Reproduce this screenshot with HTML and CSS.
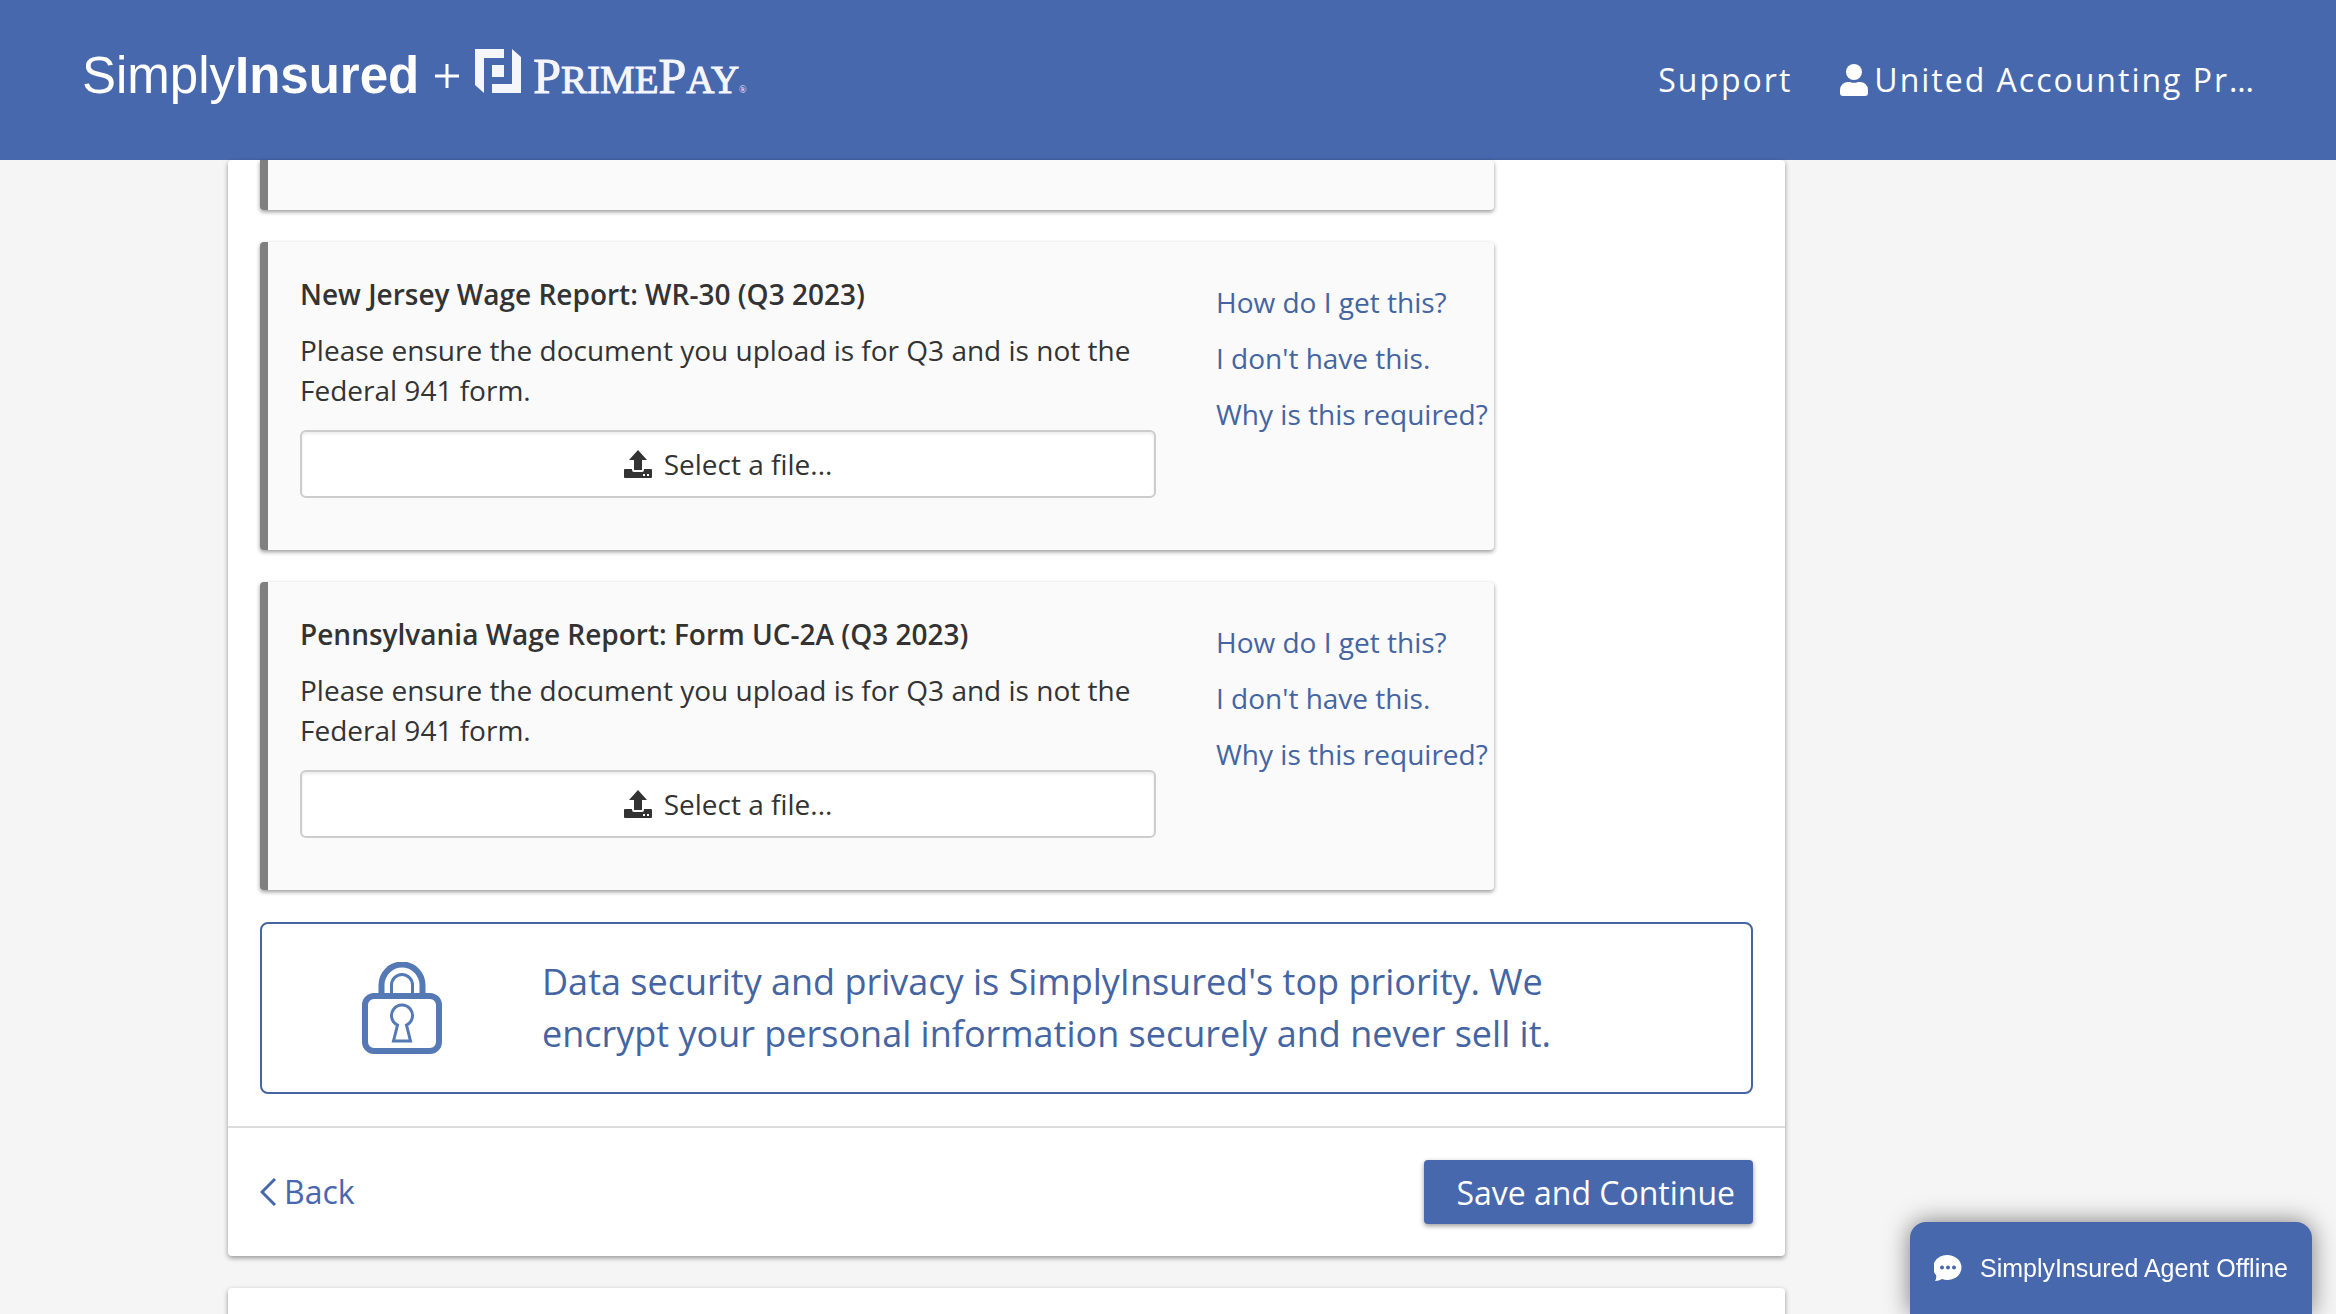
FILE: index.html
```html
<!DOCTYPE html>
<html lang="en">
<head>
    <meta charset="UTF-8">
    <meta name="viewport" content="width=device-width, initial-scale=1.0">
    <title>SimplyInsured - Documents</title>
    <link rel="stylesheet" href="styles.css">
</head>
<body>
    <header class="header">
        <a class="brand" href="#">
            <span class="brand-name">Simply<b>Insured</b></span>
            <svg class="brand-plus" viewBox="0 0 24 24"><path d="M12 0v24M0 12h24" stroke="#fff" stroke-width="3"/></svg>
            <svg class="brand-mark" viewBox="0 0 46 44" fill="#f5f6fb">
                <path d="M0 0H29V9H9V44L0 36Z"/>
                <path d="M37 0L46 8V44H17V35H37Z"/>
                <path d="M17 16H29V28H17Z"/>
            </svg>
            <span class="partner">P<small>RIME</small>P<small>AY</small><sub>®</sub></span>
        </a>
        <nav class="nav">
            <a href="#">Support</a>
            <a class="account" href="#">
                <svg class="user-icon" viewBox="0 0 28 32" fill="#fff"><circle cx="14" cy="8" r="8"/><path d="M8 18h2a10 10 0 0 0 8 0h2a8 8 0 0 1 8 8v3a3 3 0 0 1-3 3H3a3 3 0 0 1-3-3v-3a8 8 0 0 1 8-8z"/></svg>
                <span>United Accounting Pr…</span>
            </a>
        </nav>
    </header>

    <main class="main">
        <section class="card">
            <div class="card-body">
                <div class="document document-previous"></div>

                <div class="document">
                    <div class="document-form">
                        <h2>New Jersey Wage Report: WR-30 (Q3 2023)</h2>
                        <p>Please ensure the document you upload is for Q3 and is not the Federal 941 form.</p>
                        <button class="upload" type="button">
                            <svg class="upload-icon" viewBox="0 0 28 28" fill="#333"><path d="M14 0L23 10H18V20H10V10H5Z"/><path fill-rule="evenodd" d="M1 19H8V20Q8 22 10 22H18Q20 22 20 20V19H27Q28 19 28 20V27Q28 28 27 28H1Q0 28 0 27V20Q0 19 1 19ZM19 24V26H21V24ZM23 24V26H25V24Z"/></svg>
                            Select a file...
                        </button>
                    </div>
                    <div class="document-links">
                        <a href="#">How do I get this?</a>
                        <a href="#">I don't have this.</a>
                        <a href="#">Why is this required?</a>
                    </div>
                </div>

                <div class="document">
                    <div class="document-form">
                        <h2>Pennsylvania Wage Report: Form UC-2A (Q3 2023)</h2>
                        <p>Please ensure the document you upload is for Q3 and is not the Federal 941 form.</p>
                        <button class="upload" type="button">
                            <svg class="upload-icon" viewBox="0 0 28 28" fill="#333"><path d="M14 0L23 10H18V20H10V10H5Z"/><path fill-rule="evenodd" d="M1 19H8V20Q8 22 10 22H18Q20 22 20 20V19H27Q28 19 28 20V27Q28 28 27 28H1Q0 28 0 27V20Q0 19 1 19ZM19 24V26H21V24ZM23 24V26H25V24Z"/></svg>
                            Select a file...
                        </button>
                    </div>
                    <div class="document-links">
                        <a href="#">How do I get this?</a>
                        <a href="#">I don't have this.</a>
                        <a href="#">Why is this required?</a>
                    </div>
                </div>

                <div class="security">
                    <div class="security-icon">
                        <svg class="lock" viewBox="0 0 80 92" fill="none" stroke="#5579b5">
                            <path d="M19.500 33V23A20.500 20.500 0 0 1 60.500 23V33" stroke-width="6"/>
                            <path d="M29.500 33V23A10.500 10.500 0 0 1 50.500 23V33" stroke-width="3"/>
                            <rect x="3" y="34" width="74" height="55" rx="9" stroke-width="6"/>
                            <path d="M35.500 63A10.500 10.500 0 1 1 44.500 63L48.500 79H31.500Z" stroke-width="3"/>
                        </svg>
                    </div>
                    <p>Data security and privacy is SimplyInsured's top priority. We encrypt your personal information securely and never sell it.</p>
                </div>
            </div>

            <div class="card-footer">
                <a class="back" href="#">
                    <svg class="back-icon" viewBox="0 0 16 28"><path d="M15 1L2 14L15 27" fill="none" stroke="#4868ae" stroke-width="3"/></svg>
                    Back
                </a>
                <button class="save" type="submit">Save and Continue</button>
            </div>
        </section>

        <section class="card card-next"></section>
    </main>

    <button class="chat" type="button">
        <svg class="chat-icon" viewBox="0 0 28 28"><path d="M14 1A14 12.500 0 1 1 8 25Q5 27 1 27Q3 24 2 21A14 12.500 0 0 1 14 1Z" fill="#fff"/><g fill="#4868ae"><circle cx="8" cy="13.500" r="2"/><circle cx="14" cy="13.500" r="2"/><circle cx="20" cy="13.500" r="2"/></g></svg>
        SimplyInsured Agent Offline
    </button>
</body>
</html>
```
FILE: styles.css
```css
* {
    box-sizing: border-box;
}
body {
    margin: 0;
    background: #f5f5f5;
    color: #333;
    font-family: "Open Sans", sans-serif;
    font-size: 28px;
    line-height: 40px;
    height: 100vh;
    overflow: hidden;
}
a {
    color: #4464a2;
    text-decoration: none;
}
button {
    font-family: inherit;
    cursor: pointer;
}
.header {
    display: flex;
    justify-content: space-between;
    height: 160px;
    padding: 0 80px 0 82px;
    background: #4868ae;
}
.brand {
    display: flex;
    align-items: baseline;
    align-self: flex-start;
    padding-top: 46px;
    color: #fff;
    line-height: 60px;
}
.brand-name {
    font-family: "Liberation Sans", sans-serif;
    font-size: 51px;
}
.brand-plus {
    align-self: center;
    width: 24px;
    height: 24px;
    margin: 0 16px;
}
.brand-mark {
    width: 46px;
    height: 44px;
    margin-right: 12px;
}
.partner {
    font-family: "Liberation Serif", serif;
    font-size: 50px;
    color: #f5f6fb;
    -webkit-text-stroke: 1px #f5f6fb;
}
.partner small {
    font-size: 39px;
    line-height: 1;
}
.partner sub {
    font-size: 10px;
    line-height: 1;
    vertical-align: baseline;
    -webkit-text-stroke: 0;
}
.nav {
    display: flex;
    align-items: center;
    gap: 48px;
    font-size: 32px;
    letter-spacing: 2px;
}
.nav a {
    color: #fff;
}
.account {
    display: flex;
    align-items: center;
    gap: 6px;
}
.user-icon {
    width: 28px;
    height: 32px;
}
.main {
    width: 1557px;
    max-width: 100%;
    margin-left: 228px;
}
.card {
    margin-bottom: 32px;
    background: #fff;
    border-radius: 4px;
    box-shadow: 0 2px 5px rgba(0, 0, 0, 0.4);
}
.card-next {
    height: 200px;
}
.card-body {
    padding: 0 32px 32px;
}
.document {
    display: flex;
    justify-content: space-between;
    width: 1234px;
    max-width: 100%;
    min-height: 308px;
    margin-bottom: 32px;
    padding: 32px 0 52px 32px;
    background: #fafafa;
    border-left: 8px solid #808080;
    border-radius: 4px;
    box-shadow: 0 2px 4px rgba(0, 0, 0, 0.4);
}
.document-previous {
    min-height: 50px;
    padding: 0;
    border-top-left-radius: 0;
}
.document-form {
    width: 856px;
}
.document h2 {
    margin: 0 0 16px;
    font-size: 28px;
    font-weight: 600;
}
.document p {
    margin: 0 0 20px;
}
.upload {
    display: flex;
    justify-content: center;
    align-items: center;
    gap: 12px;
    width: 100%;
    height: 68px;
    background: #fff;
    border: 2px solid #ccc;
    border-radius: 6px;
    box-shadow: inset 0 2px 3px rgba(0, 0, 0, 0.08);
    color: #333;
    font-size: 28px;
}
.upload-icon {
    width: 28px;
    height: 28px;
}
.document-links {
    display: flex;
    flex-direction: column;
    gap: 16px;
    width: 278px;
    padding-top: 8px;
    white-space: nowrap;
}
.security {
    display: flex;
    align-items: center;
    padding: 32px 0;
    border: 2px solid #4464a2;
    border-radius: 8px;
    color: #4464a2;
    font-size: 36px;
    line-height: 52px;
}
.security-icon {
    display: flex;
    justify-content: center;
    width: 280px;
}
.lock {
    width: 80px;
    height: 92px;
}
.security p {
    width: 1060px;
    margin: 0;
}
.card-footer {
    display: flex;
    justify-content: space-between;
    align-items: center;
    padding: 32px;
    border-top: 2px solid #ddd;
    font-size: 32px;
}
.back {
    display: flex;
    align-items: center;
    gap: 8px;
    color: #4868ae;
}
.back-icon {
    width: 16px;
    height: 28px;
}
.save {
    height: 64px;
    padding: 0 18px 0 32px;
    border: none;
    border-radius: 4px;
    background: #4868ae;
    box-shadow: 0 2px 5px rgba(0, 0, 0, 0.4);
    color: #fff;
    font-size: 32px;
}
.chat {
    position: fixed;
    right: 24px;
    bottom: 0;
    display: flex;
    align-items: center;
    gap: 18px;
    height: 92px;
    padding: 0 24px;
    border: none;
    border-radius: 16px 16px 0 0;
    background: #4868ae;
    box-shadow: 0 0 24px rgba(0, 0, 0, 0.5);
    color: #fff;
    font-family: "Liberation Sans", sans-serif;
    font-size: 25px;
}
.chat-icon {
    width: 28px;
    height: 28px;
}
```
